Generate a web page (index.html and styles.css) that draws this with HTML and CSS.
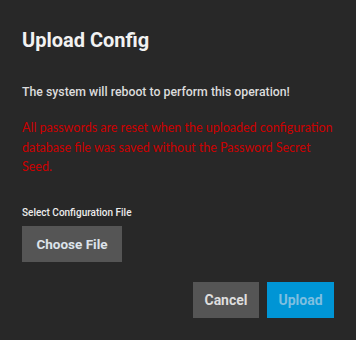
FILE: index.html
```html
<!DOCTYPE html>
<html>
<head>
<meta charset="utf-8">
<link rel="stylesheet" href="styles.css">
</head>
<body>
<div class="dialog">
  <h1 class="title">Upload Config</h1>
  <p class="message">The system will reboot to perform this operation!</p>
  <p class="warning">All passwords are reset when the uploaded configuration database file was saved without the Password Secret Seed.</p>
  <div class="field">
    <label class="label">Select Configuration File</label>
    <button class="btn btn-file">Choose File</button>
  </div>
  <div class="actions">
    <button class="btn btn-cancel">Cancel</button>
    <button class="btn btn-upload" disabled>Upload</button>
  </div>
</div>
</body>
</html>
```
FILE: styles.css
```css
html, body {
  margin: 0;
  padding: 0;
  background: #282828;
  width: 356px;
  height: 340px;
  overflow: hidden;
}
.dialog {
  padding: 28px 22px 0 22px;
  font-family: Roboto, "Liberation Sans", sans-serif;
}
.title {
  margin: 0;
  font: 700 20px/24px Roboto, sans-serif;
  color: #f2f2f2;
}
.message {
  margin: 32px 0 0 0;
  font: 500 12.3px/16px Roboto, sans-serif;
  color: #dcdcdc;
}
.warning {
  margin: 18px 0 0 0;
  font: 400 12.5px/19.5px Lato, sans-serif;
  color: #cc0000;
}
.field {
  margin-top: 30px;
  display: flex;
  flex-direction: column;
  align-items: flex-start;
}
.label {
  font: 500 10px/12px Roboto, sans-serif;
  color: #ececec;
}
.btn {
  border: 0;
  border-radius: 0;
  height: 36px;
  font: 700 14px Roboto, sans-serif;
  padding: 0;
  white-space: nowrap;
  cursor: pointer;
}
.btn-file {
  margin-top: 7px;
  width: 100px;
  font-size: 13.5px;
  background: #555555;
  color: #dde3ea;
}
.actions {
  margin-top: 20px;
  display: flex;
  justify-content: flex-end;
  gap: 8px;
}
.btn-cancel {
  width: 66px;
  background: #555555;
  color: #dedede;
}
.btn-upload {
  width: 67px;
  background: #0095d5;
  color: #7ebfe0;
}
```
